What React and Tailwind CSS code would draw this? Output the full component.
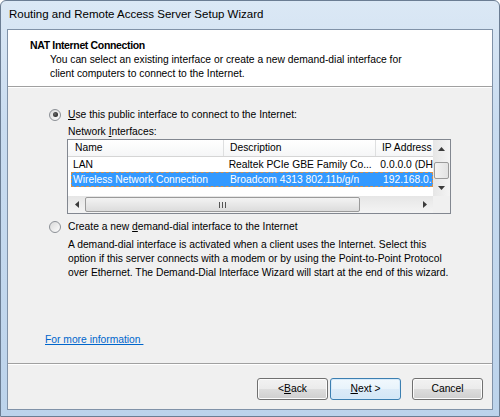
import React from 'react';

function Radio({ checked }) {
  return (
    <span className="flex h-[12px] w-[12px] shrink-0 items-center justify-center rounded-full border border-[#8c9096] bg-[linear-gradient(135deg,#d9d9d9,#fdfdfd)]">
      {checked && <span className="h-[5px] w-[5px] rounded-full bg-[radial-gradient(circle_at_40%_40%,#6a6a6a,#111111)]" />}
    </span>
  );
}

function Arrow({ dir }) {
  const pts = {
    up: '0,4 3.5,0 7,4',
    down: '0,0 3.5,4 7,0',
    left: '4,0 0,3.5 4,7',
    right: '0,0 4,3.5 0,7',
  }[dir];
  const vertical = dir === 'up' || dir === 'down';
  return (
    <svg width={vertical ? 7 : 4} height={vertical ? 4 : 7} viewBox={vertical ? '0 0 7 4' : '0 0 4 7'}>
      <polygon points={pts} fill="#3b3b3b" />
    </svg>
  );
}

function WinButton({ children, primary }) {
  return (
    <button
      className={
        primary
          ? 'flex h-[22px] w-[71px] items-center justify-center rounded-[3px] border border-[#3c7fb1] bg-[linear-gradient(to_bottom,#f1f8fd_0%,#e8f3fb_50%,#dcebf8_51%,#d2e6f6_100%)] text-[10.3px] text-black shadow-[inset_0_0_0_1px_#d6eafa]'
          : 'flex h-[22px] w-[71px] items-center justify-center rounded-[3px] border border-[#707070] bg-[linear-gradient(to_bottom,#f2f2f2_0%,#ebebeb_50%,#dddddd_51%,#cfcfcf_100%)] text-[10.3px] text-black shadow-[inset_0_0_0_1px_#fcfcfc]'
      }
    >
      {children}
    </button>
  );
}

function InterfaceList() {
  return (
    <div className="ml-[59px] h-[75px] w-[384px] border border-[#828790] bg-white">
      <div className="flex h-[56px]">
        <div className="flex w-[365px] flex-col overflow-hidden">
          <div className="flex h-[17px] shrink-0 border-b border-[#d5d5d5] bg-[linear-gradient(to_bottom,#ffffff,#f5f6f7)]">
            <div className="w-[156px] border-r border-[#dedfe0] pl-[7px] leading-[16px]">Name</div>
            <div className="w-[152px] border-r border-[#dedfe0] pl-[6px] leading-[16px]">Description</div>
            <div className="flex-1 whitespace-nowrap pl-[6px] leading-[16px]">IP Address</div>
          </div>
          <div className="flex h-[15px] shrink-0 whitespace-nowrap leading-[15px]">
            <div className="w-[156px] pl-[5px]">LAN</div>
            <div className="w-[153px] pl-[6px]">Realtek PCIe GBE Family Co...</div>
            <div className="flex-1 pl-[6px]">0.0.0.0 (DH</div>
          </div>
          <div className="ml-[3px] flex h-[15px] shrink-0 whitespace-nowrap border border-dashed border-[#d4924f] bg-[#3399ff] leading-[13px] text-white">
            <div className="w-[152px] pl-[1px]">Wireless Network Connection</div>
            <div className="w-[153px] pl-[6px]">Broadcom 4313 802.11b/g/n</div>
            <div className="flex-1 pl-[6px]">192.168.0.</div>
          </div>
        </div>
        <div className="flex w-[17px] flex-col bg-[linear-gradient(to_right,#e6e6e6,#f4f4f4)]">
          <div className="flex h-[17px] items-center justify-center"><Arrow dir="up" /></div>
          <div className="flex flex-1 flex-col justify-end">
            <div className="mx-[1px] h-[17px] rounded-[2px] border border-[#9a9a9a] bg-[linear-gradient(to_right,#f3f3f3,#e2e2e2)]" />
          </div>
          <div className="flex h-[17px] items-center justify-center"><Arrow dir="down" /></div>
        </div>
      </div>
      <div className="flex h-[17px]">
        <div className="flex w-[365px] items-center bg-[linear-gradient(to_bottom,#e6e6e6,#f4f4f4)]">
          <div className="flex h-[17px] w-[17px] items-center justify-center"><Arrow dir="left" /></div>
          <div className="flex h-[15px] w-[275px] items-center justify-center rounded-[2px] border border-[#9a9a9a] bg-[linear-gradient(to_bottom,#f3f3f3,#dcdcdc)]">
            <div className="flex gap-[2px]">
              <span className="h-[6px] w-[1px] bg-[#555]" />
              <span className="h-[6px] w-[1px] bg-[#555]" />
              <span className="h-[6px] w-[1px] bg-[#555]" />
            </div>
          </div>
          <div className="flex-1" />
          <div className="flex h-[17px] w-[17px] items-center justify-center"><Arrow dir="right" /></div>
        </div>
        <div className="w-[17px] bg-[#f0f0f0]" />
      </div>
    </div>
  );
}

export default function App() {
  return (
    <div className="h-[417px] w-[500px] overflow-hidden bg-white font-['Liberation_Sans',Arial,sans-serif] text-[10.3px] text-black">
      <div className="flex h-[417px] flex-col rounded-t-[6px] border border-[#6b7d93] bg-[linear-gradient(to_bottom,#dbe8f5,#c9dcf0_30%,#bcd3eb)]">
        <div className="flex h-[28px] shrink-0 items-center pl-[8px] text-[11.5px]">
          Routing and Remote Access Server Setup Wizard
        </div>
        <div className="ml-[6px] flex h-[381px] w-[486px] flex-col border border-[#8092a8]">
          <div className="h-[56px] shrink-0 bg-white pl-[22px] pt-[8px]">
            <div className="text-[10.5px] font-bold leading-[15px] tracking-[-0.35px]">NAT Internet Connection</div>
            <div className="pl-[20px] leading-[14px]">
              You can select an existing interface or create a new demand-dial interface for
              <br />
              client computers to connect to the Internet.
            </div>
          </div>
          <div className="h-[1px] shrink-0 bg-[#a0a0a0]" />
          <div className="h-[1px] shrink-0 bg-white" />
          <div className="flex flex-1 flex-col bg-[#f0f0f0]">
            <div className="ml-[41px] mt-[19px] flex h-[15px] items-center gap-[7px]">
              <Radio checked />
              <span className="leading-[15px]"><u>U</u>se this public interface to connect to the Internet:</span>
            </div>
            <div className="ml-[60px] mt-[2px] leading-[15px]">Network <u>I</u>nterfaces:</div>
            <InterfaceList />
            <div className="ml-[41px] mt-[5px] flex h-[15px] items-center gap-[7px]">
              <Radio />
              <span className="leading-[15px]">Create a new <u>d</u>emand-dial interface to the Internet</span>
            </div>
            <div className="ml-[60px] mt-[4px] leading-[14px]">
              A demand-dial interface is activated when a client uses the Internet. Select this
              <br />
              option if this server connects with a modem or by using the Point-to-Point Protocol
              <br />
              over Ethernet. The Demand-Dial Interface Wizard will start at the end of this wizard.
            </div>
            <div className="ml-[37px] mt-[52px] leading-[15px]">
              <span className="text-[#0066cc] underline">For more information&nbsp;</span>
            </div>
            <div className="mt-[16px] h-[1px] bg-[#a0a0a0]" />
            <div className="h-[1px] bg-white" />
            <div className="mr-[9px] mt-[13px] flex justify-end">
              <WinButton>&lt; <u>B</u>ack</WinButton>
              <div className="w-[2px]" />
              <WinButton primary><u>N</u>ext &gt;</WinButton>
              <div className="w-[11px]" />
              <WinButton>Cancel</WinButton>
            </div>
          </div>
        </div>
      </div>
    </div>
  );
}
